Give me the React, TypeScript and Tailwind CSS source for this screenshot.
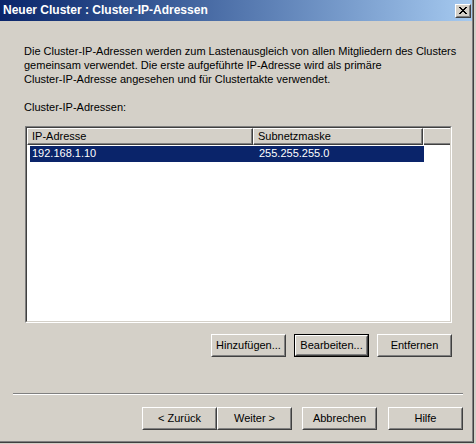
import React from "react";

const xRows = [0, 1, 2, 3, 4, 5, 6];

// classic raised button, 75x23
function Btn({ children, isDefault = false }: { children: React.ReactNode; isDefault?: boolean }) {
  const face = (
    <div className="h-full border border-t-white border-l-white border-r-[#404040] border-b-[#404040]">
      <div className="h-full border border-t-[#d4d0c8] border-l-[#d4d0c8] border-r-[#808080] border-b-[#808080] flex items-center justify-center">
        {children}
      </div>
    </div>
  );
  return (
    <div className={`w-[75px] h-[23px] ${isDefault ? "border border-black" : ""}`}>{face}</div>
  );
}

function HeaderCell({ label, w }: { label: string; w: string }) {
  return (
    <div className={`${w} h-full border-t border-l border-t-white border-l-white border-r border-b border-r-[#404040] border-b-[#404040]`}>
      <div className="h-full border-r border-b border-r-[#808080] border-b-[#808080] flex items-center pl-[4px] leading-[13px]">
        {label}
      </div>
    </div>
  );
}

export default function App() {
  return (
    <div className="w-[476px] h-[444px] bg-[#d4d0c8] overflow-hidden font-['Liberation_Sans',Arial,sans-serif] text-[11px] text-black">
      <div className="w-[474px] h-[443px] border-r border-b border-[#404040]">
        <div className="h-full border-r border-b border-[#808080] flex flex-col">
          {/* Title bar */}
          <div className="h-[21px] shrink-0 flex items-center justify-between bg-gradient-to-r from-[#0a246a] to-[#a6caf0]">
            <span className="pl-[3px] text-white font-bold text-[12px] leading-[13px] whitespace-nowrap">
              Neuer Cluster : Cluster-IP-Adressen
            </span>
            <div className="mr-[1px] w-[16px] h-[14px] bg-[#d4d0c8] border border-t-white border-l-white border-r-[#404040] border-b-[#404040]">
              <div className="h-full border border-t-[#d4d0c8] border-l-[#d4d0c8] border-r-[#808080] border-b-[#808080] flex items-center justify-center">
                <svg width="8" height="7" viewBox="0 0 8 7" shapeRendering="crispEdges">
                  <path
                    fill="#000"
                    d={xRows.map((r) => `M${r} ${r}h2v1h-2z M${6 - r} ${r}h2v1h-2z`).join(" ")}
                  />
                </svg>
              </div>
            </div>
          </div>

          {/* Content */}
          <div className="pl-[24px] flex flex-col">
            <p className="mt-[23px] leading-[14px] whitespace-nowrap">
              Die Cluster-IP-Adressen werden zum Lastenausgleich von allen Mitgliedern des Clusters
              <br />
              gemeinsam verwendet. Die erste aufgeführte IP-Adresse wird als primäre
              <br />
              Cluster-IP-Adresse angesehen und für Clustertakte verwendet.
            </p>
            <div className="mt-[15px] leading-[13px]">Cluster-IP-Adressen:</div>

            {/* List view */}
            <div className="mt-[12px] ml-[1px] w-[427px] h-[197px] border border-t-[#808080] border-l-[#808080] border-r-white border-b-white">
              <div className="h-full border border-t-[#404040] border-l-[#404040] border-r-[#d4d0c8] border-b-[#d4d0c8] bg-white flex flex-col">
                <div className="h-[17px] flex bg-[#d4d0c8]">
                  <HeaderCell label="IP-Adresse" w="w-[226px]" />
                  <HeaderCell label="Subnetzmaske" w="w-[170px]" />
                  <div className="flex-1 h-full border-t border-l border-t-white border-l-white">
                    <div className="h-full border-b border-b-[#404040]">
                      <div className="h-full border-b border-b-[#808080]" />
                    </div>
                  </div>
                </div>
                <div className="h-[17px] pl-[3px] pt-[1px]">
                  <div className="w-[394px] h-[16px] bg-[#0a246a] text-white flex leading-[14px]">
                    <span className="pl-[2px] w-[229px]">192.168.1.10</span>
                    <span>255.255.255.0</span>
                  </div>
                </div>
              </div>
            </div>
          </div>

          {/* List buttons */}
          <div className="mt-[11px] pr-[20px] flex justify-end gap-[8px]">
            <Btn>Hinzufügen...</Btn>
            <Btn isDefault>Bearbeiten...</Btn>
            <Btn>Entfernen</Btn>
          </div>

          {/* Separator */}
          <div className="mt-[36px] ml-[13px] mr-[9px] border-t border-t-[#808080] border-b border-b-white" />

          {/* Wizard buttons */}
          <div className="mt-[12px] pr-[9px] flex justify-end">
            <Btn>&lt; Zurück</Btn>
            <Btn>Weiter &gt;</Btn>
            <div className="ml-[10px]">
              <Btn>Abbrechen</Btn>
            </div>
            <div className="ml-[11px]">
              <Btn>Hilfe</Btn>
            </div>
          </div>
        </div>
      </div>
    </div>
  );
}
